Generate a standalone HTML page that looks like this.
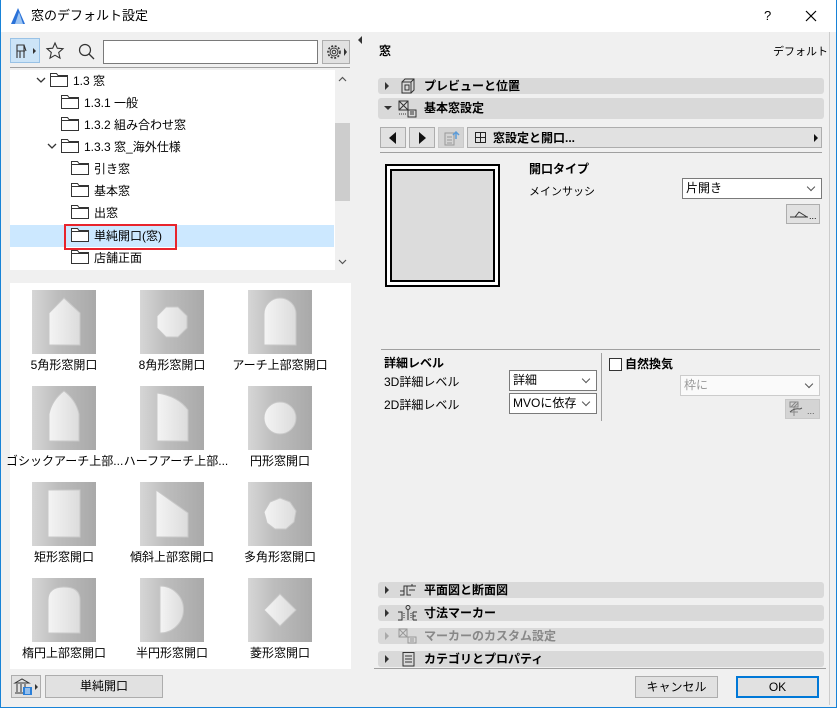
<!DOCTYPE html>
<html><head><meta charset="utf-8">
<style>
*{box-sizing:border-box;margin:0;padding:0}
body{width:837px;height:708px;position:relative;background:#f0f0f0;font-family:"Liberation Sans","Noto Sans CJK JP",sans-serif;font-size:12px;color:#000;overflow:hidden}
.a{position:absolute}
.frame{position:absolute;left:0;top:0;width:837px;height:708px;border:1px solid #1883d7;border-top:none;pointer-events:none}
.t{position:absolute;white-space:nowrap;line-height:14px}
.b{font-weight:bold}
.row{position:absolute;height:22px;line-height:22px;white-space:nowrap;font-size:12px}
.fold{display:inline-block;width:18px;height:14px;vertical-align:-2px;margin-right:5px}
.chev{display:inline-block;width:14px;height:10px;vertical-align:0}
.thumb{position:absolute;width:64px;height:64px;background:linear-gradient(90deg,#d6d6d6,#bdbdbd 40%,#a9a9a9)}
.lbl{position:absolute;width:116px;text-align:center;font-size:12px;white-space:nowrap}
.sec{position:absolute;left:378px;width:446px;height:16px;background:#d9d9d9;border-radius:3px}
.sec .tx{position:absolute;left:46px;top:0;line-height:16px;font-weight:bold;font-size:12px}
.sec .tri{position:absolute;left:7px;top:4px;width:0;height:0;border-left:4px solid #333;border-top:4px solid transparent;border-bottom:4px solid transparent}
.btn{position:absolute;background:#e1e1e1;border:1px solid #adadad;text-align:center;font-size:12px}
.sel{position:absolute;background:#fff;border:1px solid #7a7a7a;font-size:12px;line-height:18px;padding-left:3px}
.sel:after{content:"";position:absolute;right:7px;top:5px;width:5px;height:5px;border-right:1px solid #555;border-bottom:1px solid #555;transform:rotate(45deg)}
</style></head><body>
<div class="a" style="left:0;top:0;width:837px;height:32px;background:#fff"></div>
<svg class="a" style="left:9px;top:7px" width="18" height="18" viewBox="0 0 18 18"><path d="M2 17 L9 1 L16 17 Z" fill="#2a72d8"/><path d="M6 17 L10 5 L14 17Z" fill="#9cc4f2"/></svg>
<div class="t" style="left:31px;top:9px;font-size:13px">窓のデフォルト設定</div>
<div class="t" style="left:764px;top:9px;font-size:13px">?</div>
<svg class="a" style="left:805px;top:10px" width="12" height="12"><path d="M1 1L11 11M11 1L1 11" stroke="#000" stroke-width="1.2"/></svg>

<div class="a" style="left:10px;top:38px;width:30px;height:25px;background:#cce4f7;border:1px solid #99c2e6"></div>
<svg class="a" style="left:14px;top:42px" width="24" height="18" viewBox="0 0 24 18"><path d="M3 16V3h7v13M3 9h8M6 9v7M10 3l2 6" stroke="#333" fill="none" stroke-width="1.1"/><path d="M19 6l3 3-3 3z" fill="#333"/></svg>
<svg class="a" style="left:45px;top:41px" width="20" height="20" viewBox="0 0 20 20"><path d="M10 2l2.3 5.2 5.7.5-4.3 3.8 1.3 5.6L10 14.2 5 17.1l1.3-5.6L2 7.7l5.7-.5z" fill="none" stroke="#333" stroke-width="1.1"/></svg>
<svg class="a" style="left:77px;top:42px" width="18" height="18"><circle cx="8" cy="8" r="5.5" fill="none" stroke="#333" stroke-width="1.2"/><path d="M12 12l5 5" stroke="#333" stroke-width="1.3"/></svg>
<div class="a" style="left:103px;top:40px;width:215px;height:24px;background:#fff;border:1px solid #7a7a7a"></div>
<div class="a" style="left:322px;top:40px;width:28px;height:24px;background:#e1e1e1;border:1px solid #adadad"></div>
<svg class="a" style="left:325px;top:43px" width="24" height="18" viewBox="0 0 24 18"><circle cx="9" cy="9" r="6" fill="none" stroke="#333" stroke-width="1.6" stroke-dasharray="2 1.6"/><circle cx="9" cy="9" r="4" fill="none" stroke="#333"/><circle cx="9" cy="9" r="1.8" fill="none" stroke="#333"/><path d="M19 5l3 4-3 4z" fill="#333"/></svg>
<div class="a" style="left:10px;top:67px;width:340px;height:1px;background:#a0a0a0"></div>

<div class="a" style="left:10px;top:70px;width:340px;height:200px;background:#fff"></div>
<div class="a" style="left:10px;top:225px;width:324px;height:22px;background:#cce8ff"></div>
<div class="a" style="left:335px;top:70px;width:15px;height:200px;background:#f0f0f0"></div>
<div class="a" style="left:335px;top:123px;width:15px;height:78px;background:#cdcdcd"></div>
<svg class="a" style="left:338px;top:76px" width="9" height="6"><path d="M1 5l3.5-3.5L8 5" stroke="#555" fill="none" stroke-width="1.2"/></svg>
<svg class="a" style="left:338px;top:259px" width="9" height="6"><path d="M1 1l3.5 3.5L8 1" stroke="#555" fill="none" stroke-width="1.2"/></svg>
<svg width="0" height="0" style="position:absolute"><defs><symbol id="f" viewBox="0 0 18 14"><path d="M0.5 13.5V0.5h6l1.5 2h9.5v11z" fill="#fff" stroke="#333"/><path d="M0.5 3.5h17" stroke="#333"/></symbol><symbol id="c" viewBox="0 0 14 10"><path d="M1 3l4 4 4-4" stroke="#333" fill="none" stroke-width="1.3"/></symbol></defs></svg>
<div class="row" style="left:36px;top:70px"><svg class="chev"><use href="#c"/></svg><svg class="fold"><use href="#f"/></svg>1.3 窓</div>
<div class="row" style="left:61px;top:92px"><svg class="fold"><use href="#f"/></svg>1.3.1 一般</div>
<div class="row" style="left:61px;top:114px"><svg class="fold"><use href="#f"/></svg>1.3.2 組み合わせ窓</div>
<div class="row" style="left:47px;top:136px"><svg class="chev"><use href="#c"/></svg><svg class="fold"><use href="#f"/></svg>1.3.3 窓_海外仕様</div>
<div class="row" style="left:71px;top:158px"><svg class="fold"><use href="#f"/></svg>引き窓</div>
<div class="row" style="left:71px;top:180px"><svg class="fold"><use href="#f"/></svg>基本窓</div>
<div class="row" style="left:71px;top:202px"><svg class="fold"><use href="#f"/></svg>出窓</div>
<div class="row" style="left:71px;top:225px"><svg class="fold"><use href="#f"/></svg>単純開口(窓)</div>
<div class="row" style="left:71px;top:247px"><svg class="fold"><use href="#f"/></svg>店舗正面</div>
<div class="a" style="left:64px;top:224px;width:113px;height:26px;border:2px solid #e8242c"></div>

<div class="a" style="left:10px;top:283px;width:341px;height:386px;background:#fff"></div>
<svg width="0" height="0" style="position:absolute"><defs><linearGradient id="g" x1="0" x2="1"><stop offset="0" stop-color="#f4f4f4"/><stop offset="1" stop-color="#dcdcdc"/></linearGradient></defs></svg>

<div class="thumb" style="left:32px;top:290px"><svg width="64" height="64"><path d="M17 23L32 8 48 23V55H17Z" fill="url(#g)" stroke="#c8c8c8"/></svg></div>
<div class="thumb" style="left:140px;top:290px"><svg width="64" height="64"><path d="M26 17H38L47 26V38L38 47H26L17 38V26Z" fill="url(#g)" stroke="#c8c8c8"/></svg></div>
<div class="thumb" style="left:248px;top:290px"><svg width="64" height="64"><path d="M16 55V24A16 16 0 0 1 48 24V55Z" fill="url(#g)" stroke="#c8c8c8"/></svg></div>
<div class="lbl" style="left:6px;top:356px">5角形窓開口</div>
<div class="lbl" style="left:114px;top:356px">8角形窓開口</div>
<div class="lbl" style="left:222px;top:356px">アーチ上部窓開口</div>

<div class="thumb" style="left:32px;top:386px"><svg width="64" height="64"><path d="M17 55V28Q20 14 32 5Q44 14 47 28V55Z" fill="url(#g)" stroke="#c8c8c8"/></svg></div>
<div class="thumb" style="left:140px;top:386px"><svg width="64" height="64"><path d="M17 55V7Q38 10 48 24V55Z" fill="url(#g)" stroke="#c8c8c8"/></svg></div>
<div class="thumb" style="left:248px;top:386px"><svg width="64" height="64"><circle cx="32" cy="32" r="16" fill="url(#g)" stroke="#c8c8c8"/></svg></div>
<div class="lbl" style="left:6px;top:452px">ゴシックアーチ上部...</div>
<div class="lbl" style="left:118px;top:452px">ハーフアーチ上部...</div>
<div class="lbl" style="left:222px;top:452px">円形窓開口</div>

<div class="thumb" style="left:32px;top:482px"><svg width="64" height="64"><path d="M16 8H48V55H16Z" fill="url(#g)" stroke="#c8c8c8"/></svg></div>
<div class="thumb" style="left:140px;top:482px"><svg width="64" height="64"><path d="M16 8L48 31V55H16Z" fill="url(#g)" stroke="#c8c8c8"/></svg></div>
<div class="thumb" style="left:248px;top:482px"><svg width="64" height="64"><path d="M32 16L42 20 48 29 46 40 38 47 27 47 19 41 16 30 22 20Z" fill="url(#g)" stroke="#c8c8c8"/></svg></div>
<div class="lbl" style="left:6px;top:548px">矩形窓開口</div>
<div class="lbl" style="left:114px;top:548px">傾斜上部窓開口</div>
<div class="lbl" style="left:222px;top:548px">多角形窓開口</div>

<div class="thumb" style="left:32px;top:578px"><svg width="64" height="64"><path d="M16 55V22Q16 9 32 9Q48 9 48 22V55Z" fill="url(#g)" stroke="#c8c8c8"/></svg></div>
<div class="thumb" style="left:140px;top:578px"><svg width="64" height="64"><path d="M20 8A23 23 0 0 1 20 55Z" fill="url(#g)" stroke="#c8c8c8"/></svg></div>
<div class="thumb" style="left:248px;top:578px"><svg width="64" height="64"><path d="M32 16L48 32 32 48 16 32Z" fill="url(#g)" stroke="#c8c8c8"/></svg></div>
<div class="lbl" style="left:6px;top:644px">楕円上部窓開口</div>
<div class="lbl" style="left:114px;top:644px">半円形窓開口</div>
<div class="lbl" style="left:222px;top:644px">菱形窓開口</div>

<div class="btn" style="left:11px;top:675px;width:30px;height:23px"></div>
<svg class="a" style="left:13px;top:678px" width="26" height="18" viewBox="0 0 26 18"><path d="M2 5L9 1 16 5ZM2 5h14M4 6v8M8 6v8M12 6v8M2 15h14" stroke="#333" fill="none"/><rect x="10" y="9" width="9" height="8" fill="#2b7fd8"/><path d="M12 11h5M12 13h5M12 15h5" stroke="#fff"/><path d="M22 6l3 3-3 3z" fill="#333"/></svg>
<div class="btn" style="left:45px;top:675px;width:118px;height:23px;line-height:21px">単純開口</div>

<div class="a" style="left:358px;top:36px;width:0;height:0;border-right:4px solid #333;border-top:4px solid transparent;border-bottom:4px solid transparent"></div>
<div class="a" style="left:366px;top:32px;width:464px;height:673px;background:#f0f0f0"></div>
<div class="a" style="left:829px;top:32px;width:1px;height:673px;background:#ccc"></div>

<div class="t b" style="left:379px;top:44px">窓</div>
<div class="t" style="right:9px;top:45px;font-size:11px">デフォルト</div>

<div class="sec" style="top:78px"><div class="tri"></div><div class="tx">プレビューと位置</div>
<svg class="a" style="left:22px;top:0" width="16" height="16"><path d="M2 4h9v11H2zM2 4l3-3h9v11l-3 3M11 4l3-3" fill="none" stroke="#333"/><rect x="5" y="7" width="4" height="5" fill="none" stroke="#333"/></svg></div>
<div class="sec" style="top:98px;height:21px"><div class="tri" style="left:6px;top:8px;border-left:4px solid transparent;border-right:4px solid transparent;border-top:4px solid #333;border-bottom:none"></div><div class="tx" style="line-height:21px">基本窓設定</div>
<svg class="a" style="left:20px;top:2px" width="20" height="18"><rect x="1" y="1" width="9" height="9" fill="none" stroke="#333"/><path d="M1 1l9 9M10 1l-9 9" stroke="#333"/><rect x="10" y="10" width="8" height="7" fill="none" stroke="#333"/><path d="M12 12h4M12 14h4" stroke="#333"/><path d="M1 14h7" stroke="#333" stroke-dasharray="1 1"/></svg></div>

<div class="btn" style="left:380px;top:127px;width:26px;height:21px"></div>
<div class="a" style="left:389px;top:132px;width:0;height:0;border-right:7px solid #111;border-top:6px solid transparent;border-bottom:6px solid transparent"></div>
<div class="btn" style="left:409px;top:127px;width:26px;height:21px"></div>
<div class="a" style="left:419px;top:132px;width:0;height:0;border-left:7px solid #111;border-top:6px solid transparent;border-bottom:6px solid transparent"></div>
<div class="btn" style="left:438px;top:127px;width:26px;height:21px;background:#d4d4d4;border-color:#c8c8c8"></div>
<svg class="a" style="left:443px;top:129px" width="18" height="18"><rect x="2" y="4" width="9" height="12" fill="none" stroke="#999"/><path d="M4 8h5M4 11h5M4 14h5" stroke="#999"/><path d="M13 10V3M10 6l3-3 3 3" stroke="#5b9bd8" fill="none" stroke-width="1.5"/></svg>
<div class="btn" style="left:467px;top:127px;width:355px;height:21px;text-align:left"></div>
<svg class="a" style="left:475px;top:132px" width="12" height="12"><rect x="0.5" y="0.5" width="10" height="10" fill="none" stroke="#222"/><path d="M5.5 0v11M0 5.5h11" stroke="#222"/></svg>
<div class="t b" style="left:493px;top:131px">窓設定と開口...</div>
<div class="a" style="left:814px;top:134px;width:0;height:0;border-left:4px solid #111;border-top:4px solid transparent;border-bottom:4px solid transparent"></div>
<div class="a" style="left:380px;top:152px;width:442px;height:1px;background:#a0a0a0"></div>

<div class="a" style="left:385px;top:164px;width:115px;height:123px;border:2px solid #000;background:#fff"></div>
<div class="a" style="left:390px;top:169px;width:105px;height:113px;border:2px solid #000;background:#dcdcdc"></div>

<div class="t b" style="left:529px;top:162px">開口タイプ</div>
<div class="t" style="left:529px;top:185px;font-size:11px">メインサッシ</div>
<div class="sel" style="left:682px;top:178px;width:140px;height:21px">片開き</div>
<div class="btn" style="left:786px;top:204px;width:34px;height:20px"></div>
<svg class="a" style="left:789px;top:207px" width="30" height="14"><path d="M1 10h3M6 10l4-5 8 5M6 10h12M3 10h16" stroke="#333" fill="none"/><text x="20" y="12" font-size="9" font-family="Liberation Sans">...</text></svg>

<div class="a" style="left:381px;top:349px;width:439px;height:1px;background:#a0a0a0"></div>
<div class="t b" style="left:384px;top:356px">詳細レベル</div>
<div class="t" style="left:384px;top:375px">3D詳細レベル</div>
<div class="t" style="left:384px;top:398px">2D詳細レベル</div>
<div class="sel" style="left:509px;top:370px;width:88px;height:21px">詳細</div>
<div class="sel" style="left:509px;top:393px;width:88px;height:21px">MVOに依存</div>
<div class="a" style="left:601px;top:353px;width:1px;height:68px;background:#a0a0a0"></div>
<div class="a" style="left:609px;top:358px;width:13px;height:13px;border:1px solid #333;background:#fff"></div>
<div class="t b" style="left:625px;top:357px">自然換気</div>
<div class="sel" style="left:680px;top:375px;width:140px;height:21px;border-color:#ccc;color:#999;background:#fafafa">枠に</div>
<div class="btn" style="left:785px;top:399px;width:35px;height:20px;background:#d4d4d4;border-color:#c8c8c8"></div>
<svg class="a" style="left:788px;top:401px" width="30" height="16"><rect x="2" y="1" width="8" height="5" fill="none" stroke="#888"/><path d="M3 6l5-5M6 6l4-4M6 6v9M2 11h8" stroke="#888"/><path d="M2 11q4-4 10-3l2-1" stroke="#555" fill="none"/><text x="19" y="13" font-size="9" fill="#555" font-family="Liberation Sans">...</text></svg>

<div class="sec" style="top:582px"><div class="tri"></div><div class="tx">平面図と断面図</div>
<svg class="a" style="left:20px;top:1px" width="20" height="14"><path d="M2 12h4V3h8V1M14 3h4M9 3v9h4M11 7h6M2 8h4" stroke="#333" fill="none"/></svg></div>
<div class="sec" style="top:605px"><div class="tri"></div><div class="tx">寸法マーカー</div>
<svg class="a" style="left:19px;top:0" width="22" height="16"><circle cx="11" cy="2.5" r="2" fill="none" stroke="#333"/><path d="M11 5v10M1 7h4v8H1M16 7h4M16 11h3M16 15h4M16 7v8" stroke="#333" fill="none"/><path d="M7 8v6M14 8v6" stroke="#333" stroke-dasharray="1 1"/></svg></div>
<div class="sec" style="top:628px"><div class="tri" style="border-left-color:#aaa"></div><div class="tx" style="color:#888">マーカーのカスタム設定</div>
<svg class="a" style="left:20px;top:0" width="20" height="16"><rect x="1" y="1" width="8" height="8" fill="none" stroke="#999"/><path d="M1 1l8 8M9 1l-8 8" stroke="#999"/><rect x="10" y="9" width="8" height="6" fill="none" stroke="#999"/><path d="M12 11h4M12 13h4" stroke="#999"/></svg></div>
<div class="sec" style="top:651px"><div class="tri"></div><div class="tx">カテゴリとプロパティ</div>
<svg class="a" style="left:24px;top:1px" width="14" height="15"><rect x="1" y="0.5" width="11" height="13.5" fill="none" stroke="#333"/><path d="M3 4h7M3 7h7M3 10h7" stroke="#333"/></svg></div>
<div class="a" style="left:374px;top:668px;width:452px;height:1px;background:#a0a0a0"></div>

<div class="btn" style="left:635px;top:676px;width:83px;height:22px;line-height:20px">キャンセル</div>
<div class="btn" style="left:736px;top:676px;width:83px;height:22px;line-height:18px;border:2px solid #0078d7">OK</div>

<div class="frame"></div>
</body></html>
